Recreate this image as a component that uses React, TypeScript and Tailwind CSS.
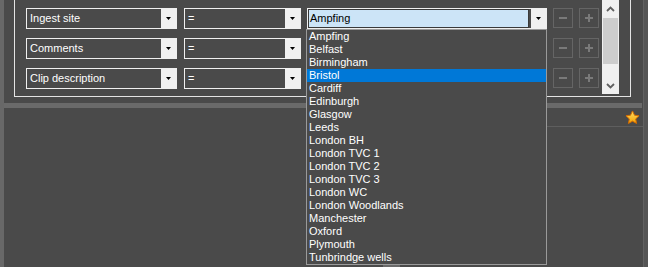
import React from 'react'

const SITES = [
  'Ampfing', 'Belfast', 'Birmingham', 'Bristol', 'Cardiff', 'Edinburgh', 'Glasgow', 'Leeds',
  'London BH', 'London TVC 1', 'London TVC 2', 'London TVC 3', 'London WC', 'London Woodlands',
  'Manchester', 'Oxford', 'Plymouth', 'Tunbrindge wells',
]

const ROWS = [
  { field: 'Ingest site', value: 'Ampfing', open: true },
  { field: 'Comments', value: '', open: false },
  { field: 'Clip description', value: '', open: false },
]

function Arrow() {
  return (
    <div className="w-[15px] h-full bg-[#f0f0f0] flex items-center justify-center shrink-0">
      <svg width="5" height="3" viewBox="0 0 5 3">
        <path d="M0 0h5L2.5 3z" fill="#000" />
      </svg>
    </div>
  )
}

function Combo({ text, width }: { text: string; width: string }) {
  return (
    <div className={`${width} h-[21px] border border-[#f0f0f0] flex items-stretch shrink-0`}>
      <div className="flex-1 pl-[3px] text-[11px] leading-[19px] text-white truncate">{text}</div>
      <Arrow />
    </div>
  )
}

function ValueCombo({ text, active }: { text: string; active: boolean }) {
  return (
    <div className="w-[240px] h-[21px] border border-[#f0f0f0] flex items-stretch shrink-0">
      {active ? (
        <div className="flex-1 border border-[#3a3a3a] bg-[#cce4f7] pl-[1px] text-[11px] leading-[17px] text-black">
          {text}
        </div>
      ) : (
        <div className="flex-1" />
      )}
      <div className="w-[2px]" />
      <Arrow />
    </div>
  )
}

function SquareButton({ plus }: { plus?: boolean }) {
  return (
    <div className="w-[20px] h-[20px] border border-[#656565] flex items-center justify-center shrink-0">
      <svg width="8" height="8" viewBox="0 0 8 8">
        <rect x="0" y="3" width="8" height="2" fill="#7a7a7a" />
        {plus && <rect x="3" y="0" width="2" height="8" fill="#7a7a7a" />}
      </svg>
    </div>
  )
}

function ScrollBar() {
  return (
    <div className="w-[17px] h-[94px] bg-[#f0f0f0] flex flex-col items-center shrink-0">
      <div className="h-[18px] flex items-center justify-center">
        <svg width="9" height="6" viewBox="0 0 9 6">
          <path d="M1 5L4.5 1.5L8 5" stroke="#606060" strokeWidth="1.8" fill="none" />
        </svg>
      </div>
      <div className="w-[15px] h-[46px] bg-[#cdcdcd]" />
      <div className="flex-1 flex items-end justify-center pb-[5px]">
        <svg width="9" height="6" viewBox="0 0 9 6">
          <path d="M1 1L4.5 4.5L8 1" stroke="#606060" strokeWidth="1.8" fill="none" />
        </svg>
      </div>
    </div>
  )
}

function Star() {
  return (
    <svg width="15" height="15" viewBox="0 0 24 24">
      <defs>
        <linearGradient id="sg" x1="0" y1="0" x2="0" y2="1">
          <stop offset="0" stopColor="#ffe066" />
          <stop offset="1" stopColor="#f5a000" />
        </linearGradient>
      </defs>
      <path
        d="M12 1.5l3.2 6.8 7.3.9-5.4 5 1.4 7.3L12 17.9l-6.5 3.6 1.4-7.3-5.4-5 7.3-.9z"
        fill="url(#sg)"
        stroke="#d46a00"
        strokeWidth="1.6"
        strokeLinejoin="round"
      />
    </svg>
  )
}

export default function App() {
  return (
    <div
      className="relative w-[648px] h-[267px] overflow-hidden bg-[#4a4a4a] flex"
      style={{ fontFamily: '"Liberation Sans", Arial, sans-serif' }}
    >
      <div className="w-[4px] bg-[#686868] shrink-0" />

      <div className="flex-1 flex flex-col">
        {/* filter panel */}
        <div className="h-[99px] pl-[10px]">
          <div className="w-[617px] h-[98px] -mt-px border border-[#e4e4e4] flex">
            <div className="flex flex-col gap-[9px] pl-[11px] pt-[8px]">
              {ROWS.map((r) => (
                <div key={r.field} className="flex items-start">
                  <Combo text={r.field} width="w-[151px]" />
                  <div className="w-[7px]" />
                  <Combo text="=" width="w-[117px]" />
                  <div className="w-[6px]" />
                  <ValueCombo text={r.value} active={r.open} />
                  <div className="w-[6px]" />
                  <SquareButton />
                  <div className="w-[6px]" />
                  <SquareButton plus />
                </div>
              ))}
            </div>
            <div className="pl-[3px]">
              <ScrollBar />
            </div>
          </div>
        </div>

        <div className="h-[4px]" />
        <div className="h-[5px] bg-[#6a6a6a] mr-px" />

        {/* toolbar with favourite */}
        <div className="h-[19px] flex items-center justify-end pr-[3px] border-b border-[#5e5e5e] ml-[320px]">
          <Star />
        </div>

        <div className="flex-1 flex items-end pl-[379px]">
          <div className="w-[17px] h-[3px] bg-[#6a6a6a]" />
        </div>
      </div>

      <div className="w-[5px] bg-[#555555] border-l border-[#616161] shrink-0" />

      {/* open dropdown list */}
      <div className="absolute left-[306px] top-[29px] w-[241px] h-[236px] border border-[#9a9a9a] bg-[#4a4a4a]">
        {SITES.map((s) => (
          <div
            key={s}
            className={`h-[13px] pl-[2px] text-[11px] leading-[13px] text-white whitespace-nowrap ${
              s === 'Bristol' ? 'bg-[#0078d7]' : ''
            }`}
          >
            {s}
          </div>
        ))}
      </div>
    </div>
  )
}
